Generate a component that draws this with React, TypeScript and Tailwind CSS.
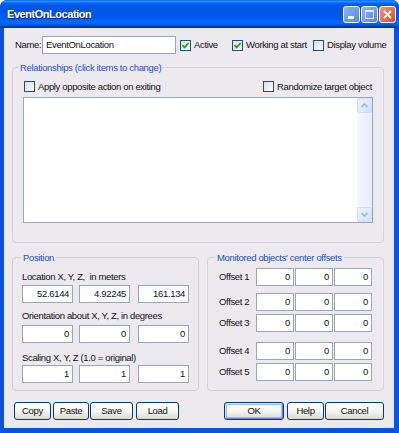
import React from 'react';

function CheckBox({ checked }: { checked?: boolean }) {
  return (
    <span className="inline-flex w-[11px] h-[11px] shrink-0 border border-[#1c5180] bg-[linear-gradient(135deg,#dcdcd7,#ffffff)] items-center justify-center">
      {checked && (
        <svg width="9" height="9" viewBox="0 0 9 9">
          <path d="M1.5 4.2 L3.6 6.4 L7.6 2" stroke="#21a121" strokeWidth="1.8" fill="none" />
        </svg>
      )}
    </span>
  );
}

function Field({ value, className }: { value: string; className: string }) {
  return (
    <div className={`h-[18px] border border-[#9aa6b5] bg-white flex items-center justify-end pr-[3px] ${className}`}>
      {value}
    </div>
  );
}

function Btn({ label, className }: { label: string; className: string }) {
  return (
    <div
      className={`h-[18px] flex items-center justify-center border border-[#003c74] rounded-[3px] bg-[linear-gradient(to_bottom,#ffffff,#f4f4f0_55%,#dcd9d2)] text-[#111] ${className}`}
    >
      {label}
    </div>
  );
}

function Legend({ text, className }: { text: string; className: string }) {
  return (
    <span className={`-mt-[6px] px-[2px] w-fit whitespace-nowrap bg-[#eceaef] text-[#2450b4] leading-[12px] ${className}`}>{text}</span>
  );
}

function Chevron({ up }: { up?: boolean }) {
  return (
    <svg width="13" height="13" viewBox="0 0 13 13">
      <path
        d={up ? 'M3.5 8 L6.5 5 L9.5 8' : 'M3.5 5 L6.5 8 L9.5 5'}
        stroke="#a9bbe0"
        strokeWidth="1.8"
        fill="none"
      />
    </svg>
  );
}

export default function App() {
  return (
    <div className="w-[399px] h-[433px] flex flex-col rounded-t-[7px] overflow-hidden bg-[#0a53de] font-['Liberation_Sans',Arial,sans-serif] text-[9.5px] tracking-[-0.35px] leading-[12px] text-[#111] whitespace-nowrap">
      {/* Title bar */}
      <div className="h-[28px] shrink-0 flex items-center pl-[7px] pr-[3px] bg-[linear-gradient(to_bottom,#0058ee_0%,#3593ff_4%,#288eff_6%,#127dff_8%,#036ffc_10%,#0262ee_14%,#0057e5_20%,#0054e3_24%,#0055eb_56%,#005bf5_66%,#026afe_76%,#0062ef_86%,#0052d6_92%,#0040ab_94%,#003092_100%)]">
        <span className="flex-1 text-white font-bold text-[11px] tracking-[-0.45px] [text-shadow:1px_1px_0_#0a1f80]">EventOnLocation</span>
        <div className="flex gap-[1px]">
          <div className="w-[17px] h-[17px] rounded-[3px] border border-white bg-[linear-gradient(135deg,#8fb4f8,#4f86ec)] relative flex items-end pl-[4px] pb-[3px]">
            <div className="w-[6px] h-[3px] bg-white" />
          </div>
          <div className="w-[17px] h-[17px] rounded-[3px] border border-white bg-[linear-gradient(135deg,#8fb4f8,#4f86ec)] flex items-center justify-center">
            <div className="w-[9px] h-[9px] border border-t-[2px] border-[#dfe8fb]" />
          </div>
          <div className="w-[17px] h-[17px] rounded-[3px] border border-white bg-[linear-gradient(135deg,#f09a7e,#d9491f)] flex items-center justify-center">
            <svg width="9" height="9" viewBox="0 0 9 9">
              <path d="M1 1 L8 8 M8 1 L1 8" stroke="white" strokeWidth="1.8" />
            </svg>
          </div>
        </div>
      </div>

      {/* Body */}
      <div className="flex-1 ml-[4px] mr-[5px] mb-[5px] bg-[#eceaef] flex flex-col">
        {/* Name row */}
        <div className="mt-[8px] h-[18px] flex items-center">
          <span className="ml-[11px] w-[27px]">Name:</span>
          <div className="w-[134px] h-[18px] border border-[#9aa6b5] bg-white pl-[3px] flex items-center">EventOnLocation</div>
          <label className="ml-[4px] w-[52px] flex items-center gap-[3px]">
            <CheckBox checked />
            Active
          </label>
          <label className="w-[81px] flex items-center gap-[3px]">
            <CheckBox checked />
            Working at start
          </label>
          <label className="flex items-center gap-[3px]">
            <CheckBox />
            Display volume
          </label>
        </div>

        {/* Relationships */}
        <div className="mt-[13px] ml-[8px] w-[372px] h-[176px] border border-[#d3d1d6] rounded-[4px] flex flex-col">
          <Legend text="Relationships (click items to change)" className="ml-[5px]" />
          <div className="mt-[7px] h-[11px] flex items-center justify-between pl-[11px] pr-[11px]">
            <label className="flex items-center gap-[3px]">
              <CheckBox />
              Apply opposite action on exiting
            </label>
            <label className="flex items-center gap-[3px]">
              <CheckBox />
              Randomize target object
            </label>
          </div>
          <div className="mt-[5px] mx-[10px] h-[126px] border border-[#9aa6b5] bg-white flex justify-end">
            <div className="w-[15px] flex flex-col bg-[linear-gradient(to_right,#f5f7fc,#e7edfb)]">
              <div className="h-[15px] rounded-[2px] border border-[#d0dcf6] bg-[linear-gradient(135deg,#eef3fe,#d5e1fa)] flex items-center justify-center">
                <Chevron up />
              </div>
              <div className="flex-1" />
              <div className="h-[15px] rounded-[2px] border border-[#d0dcf6] bg-[linear-gradient(135deg,#eef3fe,#d5e1fa)] flex items-center justify-center">
                <Chevron />
              </div>
            </div>
          </div>
        </div>

        {/* Position + offsets */}
        <div className="mt-[14px] ml-[8px] h-[134px] flex gap-[8px]">
          <div className="w-[187px] border border-[#d3d1d6] rounded-[4px] flex flex-col">
            <Legend text="Position" className="ml-[8px]" />
            <span className="mt-[7px] pl-[9px]">Location X, Y, Z,&nbsp; in meters</span>
            <div className="mt-[2px] pl-[9px] flex">
              <Field value="52.6144" className="w-[51px]" />
              <Field value="4.92245" className="ml-[6px] w-[51px]" />
              <Field value="161.134" className="ml-[8px] w-[51px]" />
            </div>
            <span className="mt-[7px] pl-[9px]">Orientation about X, Y, Z, in degrees</span>
            <div className="mt-[3px] pl-[9px] flex">
              <Field value="0" className="w-[51px]" />
              <Field value="0" className="ml-[6px] w-[51px]" />
              <Field value="0" className="ml-[8px] w-[51px]" />
            </div>
            <span className="mt-[9px] pl-[9px]">Scaling X, Y, Z (1.0 = original)</span>
            <div className="mt-[1px] pl-[9px] flex">
              <Field value="1" className="w-[51px]" />
              <Field value="1" className="ml-[6px] w-[51px]" />
              <Field value="1" className="ml-[8px] w-[51px]" />
            </div>
          </div>

          <div className="w-[177px] border border-[#d3d1d6] rounded-[4px] flex flex-col">
            <Legend text="Monitored objects' center offsets" className="ml-[7px]" />
            {[
              { n: 1, mt: 'mt-[4px]' },
              { n: 2, mt: 'mt-[7px]' },
              { n: 3, mt: 'mt-[3px]' },
              { n: 4, mt: 'mt-[10px]' },
              { n: 5, mt: 'mt-[3px]' },
            ].map((r) => (
              <div key={r.n} className={`${r.mt} pl-[11px] flex items-center`}>
                <span className="w-[37px]">Offset {r.n}</span>
                <div className="flex gap-[1px]">
                  <Field value="0" className="w-[38px]" />
                  <Field value="0" className="w-[38px]" />
                  <Field value="0" className="w-[38px]" />
                </div>
              </div>
            ))}
          </div>
        </div>

        {/* Buttons */}
        <div className="mt-[11px] flex">
          <Btn label="Copy" className="ml-[10px] w-[37px]" />
          <Btn label="Paste" className="ml-[2px] w-[36px]" />
          <Btn label="Save" className="ml-[1px] w-[43px]" />
          <Btn label="Load" className="ml-[3px] w-[43px]" />
          <Btn
            label="OK"
            className="ml-[45px] w-[60px] shadow-[inset_1px_1px_0_#cee7ff,inset_-1px_-1px_0_#6982ee,inset_0_0_0_2px_#9dbcf0]"
          />
          <Btn label="Help" className="ml-[3px] w-[37px]" />
          <Btn label="Cancel" className="ml-[1px] w-[59px]" />
        </div>
      </div>
    </div>
  );
}
